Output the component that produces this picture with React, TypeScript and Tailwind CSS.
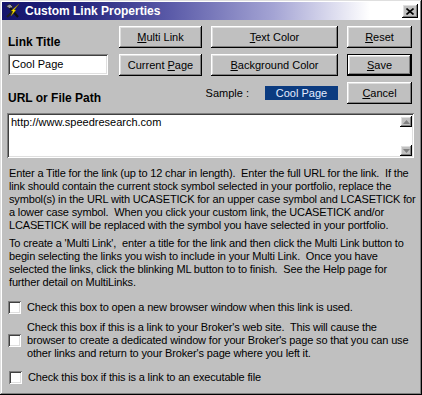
import type { ReactNode } from "react"

const raised =
  "shadow-[inset_-1px_-1px_#000,inset_1px_1px_#fff,inset_-2px_-2px_#808080,inset_2px_2px_#dfdfdf]"
const sunken =
  "shadow-[inset_1px_1px_#808080,inset_-1px_-1px_#fff,inset_2px_2px_#404040,inset_-2px_-2px_#dfdfdf]"

function Btn({ children, isDefault }: { children: ReactNode; isDefault?: boolean }) {
  if (isDefault) {
    return (
      <div className="h-[22px] border border-black">
        <div className={`h-full flex items-center justify-center bg-[#c0c0c0] ${raised}`}>
          <span>{children}</span>
        </div>
      </div>
    )
  }
  return (
    <div className={`h-[22px] flex items-center justify-center bg-[#c0c0c0] ${raised}`}>
      <span>{children}</span>
    </div>
  )
}

function Check() {
  return <div className={`w-[13px] h-[13px] shrink-0 bg-white ${sunken}`} />
}

function Arrow({ up }: { up?: boolean }) {
  return (
    <div className={`w-[12px] h-[11px] flex items-center justify-center bg-[#c0c0c0] ${raised}`}>
      <svg width="7" height="4" viewBox="0 0 7 4">
        {up ? <polygon points="3.5,0 7,4 0,4" fill="#808080" /> : <polygon points="0,0 7,0 3.5,4" fill="#808080" />}
      </svg>
    </div>
  )
}

export default function App() {
  return (
    <div
      className="w-[422px] h-[395px] bg-[#c0c0c0] p-[2px] text-black text-[11px] font-['Liberation_Sans',Arial,sans-serif] shadow-[inset_-1px_-1px_#000,inset_1px_1px_#dfdfdf,inset_-2px_-2px_#808080,inset_2px_2px_#fff]"
    >
      {/* title bar */}
      <div className="h-[18px] flex items-center pl-[2px] pr-[2px] bg-[linear-gradient(to_right,#14146c,#24247c_18%,#5a5aa8_40%,#a4a4d4_65%,#ffffff_88%)]">
        <svg width="16" height="16" viewBox="0 0 16 16">
          <path d="M2 3 L6 1 L9 4 L6 6 Z" fill="#9a9aa8" stroke="#202020" strokeWidth="0.8" />
          <path d="M6 5 L14 14" stroke="#101010" strokeWidth="2.2" />
          <path d="M3 14 L10 7" stroke="#202020" strokeWidth="2.2" />
          <path d="M15 1 L10 7 L12 7 L7 13 L9 8 L7 8 Z" fill="#ffe800" stroke="#807000" strokeWidth="0.4" />
        </svg>
        <span className="ml-[5px] text-[12px] font-bold text-white leading-none">Custom Link Properties</span>
        <div className={`ml-auto w-[16px] h-[14px] flex items-center justify-center bg-[#c0c0c0] ${raised}`}>
          <svg width="8" height="7" viewBox="0 0 8 7">
            <path d="M0.5 0.5 L7.5 6.5 M7.5 0.5 L0.5 6.5" stroke="#000" strokeWidth="1.6" />
          </svg>
        </div>
      </div>

      {/* top section */}
      <div className="flex mt-[6px] pl-[6px]">
        <div className="w-[100px] flex flex-col">
          <div className="pt-[9px] leading-[14px] text-[12px] font-bold">Link Title</div>
          <div className={`mt-[5px] h-[21px] bg-white flex items-center px-[4px] ${sunken}`}>Cool Page</div>
          <div className="mt-[16px] leading-[14px] text-[12px] font-bold whitespace-nowrap">URL or File Path</div>
        </div>
        <div className="ml-[11px] grid grid-cols-[83px_127px_65px] grid-rows-[22px_22px_22px] gap-x-[9px] gap-y-[6px]">
          <Btn>
            <u>M</u>ulti Link
          </Btn>
          <Btn>
            <u>T</u>ext Color
          </Btn>
          <Btn>
            <u>R</u>eset
          </Btn>
          <Btn>
            Current <u>P</u>age
          </Btn>
          <Btn>
            <u>B</u>ackground Color
          </Btn>
          <Btn isDefault>
            <u>S</u>ave
          </Btn>
          <div className="col-span-2 flex items-center justify-end">
            <span>Sample :</span>
            <div className="ml-[16px] w-[73px] h-[14px] bg-[#0b3b80] text-[#e4ecff] flex items-center justify-center leading-none">
              Cool Page
            </div>
          </div>
          <Btn>
            <u>C</u>ancel
          </Btn>
        </div>
      </div>

      {/* url box */}
      <div className={`mt-[8px] ml-[5px] w-[407px] h-[45px] bg-white flex pl-[4px] pr-[2px] pt-[3px] pb-[2px] ${sunken}`}>
        <div className="flex-1 leading-[13px]">http://www.speedresearch.com</div>
        <div className="flex flex-col justify-between">
          <Arrow up />
          <Arrow />
        </div>
      </div>

      {/* help text */}
      <div className="tracking-[-0.16px]">
        <div className="mt-[9px] pl-[7px] leading-[13px] whitespace-nowrap">
          <div>Enter a Title for the link (up to 12 char in length).&nbsp; Enter the full URL for the link.&nbsp; If the</div>
          <div>link should contain the current stock symbol selected in your portfolio, replace the</div>
          <div>symbol(s) in the URL with UCASETICK for an upper case symbol and LCASETICK for</div>
          <div>a lower case symbol.&nbsp; When you click your custom link, the UCASETICK and/or</div>
          <div>LCASETICK will be replaced with the symbol you have selected in your portfolio.</div>
        </div>
        <div className="mt-[5px] pl-[7px] leading-[13px] whitespace-nowrap">
          <div>To create a 'Multi Link',&nbsp; enter a title for the link and then click the Multi Link button to</div>
          <div>begin selecting the links you wish to include in your Multi Link.&nbsp; Once you have</div>
          <div>selected the links, click the blinking ML button to to finish.&nbsp; See the Help page for</div>
          <div>further detail on MultiLinks.</div>
        </div>

        {/* checkboxes */}
        <div className="mt-[12px] pl-[6px] flex items-center gap-[6px] leading-[13px]">
          <Check />
          <span>Check this box to open a new browser window when this link is used.</span>
        </div>
        <div className="mt-[7px] pl-[6px] flex items-center gap-[6px] leading-[13px]">
          <Check />
          <div className="whitespace-nowrap">
            <div>Check this box if this is a link to your Broker's web site.&nbsp; This will cause the</div>
            <div>browser to create a dedicated window for your Broker's page so that you can use</div>
            <div>other links and return to your Broker's page where you left it.</div>
          </div>
        </div>
        <div className="mt-[11px] pl-[7px] flex items-center gap-[6px] leading-[13px]">
          <Check />
          <span>Check this box if this is a link to an executable file</span>
        </div>
      </div>
    </div>
  )
}
